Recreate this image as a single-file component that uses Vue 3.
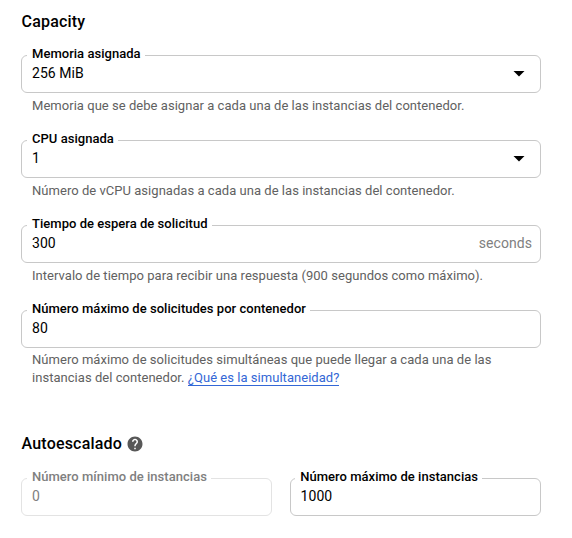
<script setup>
const fields = [
  { label: 'Memoria asignada', value: '256 MiB', select: true, hint: 'Memoria que se debe asignar a cada una de las instancias del contenedor.' },
  { label: 'CPU asignada', value: '1', select: true, hint: 'Número de vCPU asignadas a cada una de las instancias del contenedor.' },
  { label: 'Tiempo de espera de solicitud', value: '300', suffix: 'seconds', hint: 'Intervalo de tiempo para recibir una respuesta (900 segundos como máximo).' },
  {
    label: 'Número máximo de solicitudes por contenedor',
    value: '80',
    hint: 'Número máximo de solicitudes simultáneas que puede llegar a cada una de las instancias del contenedor.',
    link: '¿Qué es la simultaneidad?',
  },
]
const scaling = [
  { label: 'Número mínimo de instancias', value: '0', disabled: true },
  { label: 'Número máximo de instancias', value: '1000' },
]
</script>

<template>
  <main class="page">
    <h2 class="title">Capacity</h2>
    <section class="fields">
      <div v-for="f in fields" :key="f.label" class="field">
        <div class="box">
          <span class="label">{{ f.label }}</span>
          <span class="value">{{ f.value }}</span>
          <svg v-if="f.select" class="arrow" width="12" height="6" viewBox="0 0 12 6"><path d="M0.5 0h11L6 5.5z" /></svg>
          <span v-if="f.suffix" class="suffix">{{ f.suffix }}</span>
        </div>
        <p class="hint" :class="{ multi: f.link }">
          {{ f.hint }} <a v-if="f.link" class="link">{{ f.link }}</a>
        </p>
      </div>
    </section>
    <h2 class="title scaling-title">
      Autoescalado
      <svg class="help" width="18" height="18" viewBox="0 0 24 24">
        <path d="M12 2C6.48 2 2 6.48 2 12s4.48 10 10 10 10-4.48 10-10S17.52 2 12 2zm1 17h-2v-2h2v2zm2.07-7.75l-.9.92C13.45 12.9 13 13.5 13 15h-2v-.5c0-1.1.45-2.1 1.17-2.83l1.24-1.26c.37-.36.59-.86.59-1.41 0-1.1-.9-2-2-2s-2 .9-2 2H8c0-2.21 1.79-4 4-4s4 1.79 4 4c0 .88-.36 1.68-.93 2.25z" />
      </svg>
    </h2>
    <section class="row">
      <div v-for="f in scaling" :key="f.label" class="box" :class="{ disabled: f.disabled }">
        <span class="label">{{ f.label }}</span>
        <span class="value">{{ f.value }}</span>
      </div>
    </section>
  </main>
</template>

<style>
body {
  background: #fff;
}
</style>

<style scoped>
.page {
  box-sizing: border-box;
  width: 572px;
  height: 538px;
  padding: 12px 31px 0 21px;
  overflow: hidden;
  font-family: Roboto, sans-serif;
  color: #000;
}
.title {
  display: flex;
  align-items: center;
  height: 20px;
  margin: 0;
  padding-left: 0.5px;
  font-size: 16px;
  font-weight: 500;
  line-height: 20px;
  letter-spacing: 0.19px;
  color: #000;
}
.fields {
  display: flex;
  flex-direction: column;
  padding-top: 23px;
}
.field {
  height: 85px;
}
.box {
  position: relative;
  box-sizing: border-box;
  display: flex;
  align-items: center;
  height: 38px;
  padding: 0 8px 2px 10px;
  border: 1px solid #c8c8c8;
  border-radius: 6px;
  font-size: 14px;
}
.label {
  position: absolute;
  top: -10px;
  left: 5px;
  padding: 0 4px 0 5px;
  background: #fff;
  font-size: 13px;
  font-weight: 500;
  line-height: 16px;
  letter-spacing: 0.03px;
  white-space: nowrap;
}
.value {
  flex: 1;
  line-height: 20px;
  letter-spacing: 0.05px;
}
.arrow {
  margin: 2px 7px 0 0;
  fill: #000;
}
.suffix {
  letter-spacing: 0.05px;
  color: #808080;
}
.hint {
  margin: 0;
  padding: 4px 11px 0;
  font-size: 13px;
  line-height: 18px;
  letter-spacing: 0.036px;
  color: #616161;
}
.hint.multi {
  padding-top: 3px;
}
.link {
  color: #3367d6;
  background: linear-gradient(#3367d6, #3367d6) 0 100% / 100% 1px no-repeat;
  padding-bottom: 1px;
}
.scaling-title {
  margin-top: 39px;
}
.help {
  margin-left: 4.2px;
  fill: #585858;
}
.row {
  display: grid;
  grid-template-columns: 1fr 1fr;
  gap: 18px;
  padding-top: 24px;
}
.row .box:last-child .label {
  left: 4.2px;
}
.row .box:last-child .value {
  margin-left: -0.4px;
}
.disabled {
  border-color: #e3e3e3;
  color: #808080;
}
</style>
